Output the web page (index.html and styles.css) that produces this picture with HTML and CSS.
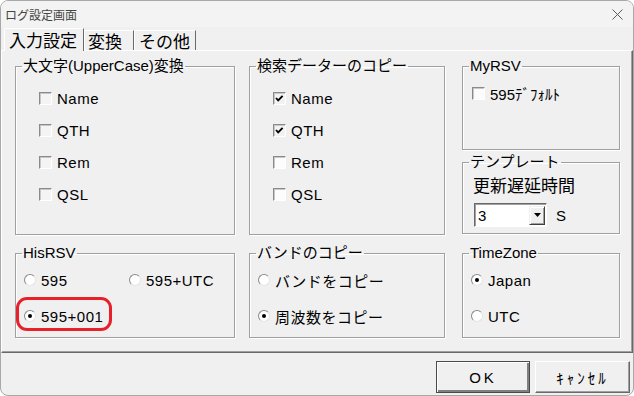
FILE: index.html
```html
<!DOCTYPE html>
<html lang="ja">
<head>
  <meta charset="UTF-8" />
  <title>ログ設定画面</title>
  <link rel="stylesheet" href="styles.css">
</head>
<body>

  <div class="window">

    <!-- Title bar -->
    <div class="titlebar">
      <span class="title">ログ設定画面</span>
      <svg class="close" width="11" height="11" viewBox="0 0 11 11">
        <path d="M0.5 0.5L10.5 10.5M10.5 0.5L0.5 10.5" stroke="#5a5a5a" stroke-width="1" fill="none"/>
      </svg>
    </div>

    <!-- Tabs -->
    <div class="tabs">
      <div class="tab active">入力設定</div>
      <div class="tab tab-conv">変換</div>
      <div class="tab tab-other">その他</div>
    </div>

    <!-- Tab page -->
    <div class="panel">
      <div class="grid">

        <fieldset class="group">
          <legend>大文字(UpperCase)変換</legend>
          <div class="checks">
            <div class="row"><span class="cb dim"></span>Name</div>
            <div class="row"><span class="cb dim"></span>QTH</div>
            <div class="row"><span class="cb dim"></span>Rem</div>
            <div class="row"><span class="cb dim"></span>QSL</div>
          </div>
        </fieldset>

        <fieldset class="group">
          <legend>検索データーのコピー</legend>
          <div class="checks">
            <div class="row"><span class="cb checked"><svg width="11" height="11" viewBox="0 0 11 11"><path d="M2 5L4.2 7.4L8.6 2.8" stroke="#000" stroke-width="1.8" fill="none"/></svg></span>Name</div>
            <div class="row"><span class="cb checked"><svg width="11" height="11" viewBox="0 0 11 11"><path d="M2 5L4.2 7.4L8.6 2.8" stroke="#000" stroke-width="1.8" fill="none"/></svg></span>QTH</div>
            <div class="row"><span class="cb"></span>Rem</div>
            <div class="row"><span class="cb"></span>QSL</div>
          </div>
        </fieldset>

        <div class="stack">
          <fieldset class="group g-myrsv">
            <legend>MyRSV</legend>
            <div class="myrsv">
              <div class="row"><span class="cb"></span>595ﾃﾞﾌｫﾙﾄ</div>
            </div>
          </fieldset>
          <fieldset class="group g-template">
            <legend>テンプレート</legend>
            <div class="template">
              <div class="delay-label">更新遅延時間</div>
              <div class="combo">
                <div class="select">
                  <span class="value">3</span>
                  <span class="arrow"><svg width="7" height="4" viewBox="0 0 7 4"><path d="M0 0H7L3.5 4Z" fill="#000"/></svg></span>
                </div>
                <span class="unit">S</span>
              </div>
            </div>
          </fieldset>
        </div>

        <fieldset class="group">
          <legend>HisRSV</legend>
          <div class="radios">
            <div class="row">
              <span class="opt opt-wide"><span class="rb"></span>595</span>
              <span class="opt"><span class="rb"></span>595+UTC</span>
            </div>
            <div class="row marked">
              <span class="opt"><span class="rb on"></span>595+001</span>
            </div>
          </div>
        </fieldset>

        <fieldset class="group">
          <legend>バンドのコピー</legend>
          <div class="radios">
            <div class="row"><span class="rb"></span>バンドをコピー</div>
            <div class="row"><span class="rb on"></span>周波数をコピー</div>
          </div>
        </fieldset>

        <fieldset class="group col3">
          <legend>TimeZone</legend>
          <div class="radios">
            <div class="row"><span class="rb on"></span>Japan</div>
            <div class="row"><span class="rb"></span>UTC</div>
          </div>
        </fieldset>

      </div>
    </div>

    <!-- Dialog buttons -->
    <div class="buttons">
      <button class="btn default">OK</button>
      <button class="btn">ｷｬﾝｾﾙ</button>
    </div>

  </div>

</body>
</html>
```

FILE: styles.css
```css
body {
  margin: 0;
  background-color: #ffffff;
  font-family: "Liberation Sans", "Noto Sans CJK JP", sans-serif;
  color: #000;
}

.window {
  width: 634px;
  height: 396px;
  box-sizing: border-box;
  border: 1px solid #a8a8a8;
  border-radius: 8px;
  background-color: #f0f0f0;
  overflow: hidden;
  display: flex;
  flex-direction: column;
}

.titlebar {
  height: 26px;
  background-color: #f3f3f3;
  display: flex;
  align-items: center;
  justify-content: space-between;
  padding: 0 10px 0 4px;
}

.title {
  font-family: "Noto Sans CJK JP", sans-serif;
  font-size: 12px;
  color: #444;
}

.tabs {
  height: 23px;
  display: flex;
  align-items: flex-end;
  padding-left: 3px;
  position: relative;
  z-index: 1;
}

.tab {
  font-family: "Noto Sans CJK JP", sans-serif;
  font-size: 17px;
  line-height: 19px;
  height: 19px;
  border-top: 1px solid #fff;
  border-left: 1px solid #fff;
  border-right: 1px solid #696969;
  padding: 0 5px 0 4px;
  background-color: #f0f0f0;
}

.tab.active {
  height: 22px;
  line-height: 21px;
  padding: 0 6px 0 4px;
  margin-bottom: -1px;
}

.tab-conv {
  padding: 0 11px 0 3px;
}

.panel {
  height: 303px;
  box-sizing: border-box;
  border-top: 1px solid #fff;
  border-left: 1px solid #fff;
  border-right: 1px solid #696969;
  border-bottom: 1px solid #696969;
  box-shadow: inset -1px -1px 0 #a0a0a0;
  padding: 6px 0 0 13px;
}

.grid {
  display: grid;
  grid-template-columns: 220px 196px 161px;
  grid-template-rows: 178px 94px;
  column-gap: 14px;
  row-gap: 9px;
}

.group {
  margin: 0;
  padding: 0;
  min-width: 0;
  box-sizing: border-box;
  border: 1px solid #a0a0a0;
  box-shadow: 1px 1px 0 #fff, inset 1px 1px 0 #fff;
}

.group legend {
  margin-left: 6px;
  padding: 0 1px;
  font-size: 15px;
  line-height: 18px;
}

.col3, .stack {
  margin-left: 3px;
}

.stack {
  display: flex;
  flex-direction: column;
  gap: 3px;
}

.g-myrsv {
  height: 93px;
}

.g-template {
  height: 81px;
}

.row {
  display: flex;
  align-items: center;
  font-size: 15px;
  letter-spacing: 0.5px;
}

.checks {
  padding: 7px 0 0 23px;
}

.checks .row {
  height: 32px;
}

.myrsv {
  padding: 2px 0 0 9px;
}

.myrsv .row {
  height: 32px;
  letter-spacing: 0;
}

.cb {
  width: 13px;
  height: 13px;
  box-sizing: border-box;
  border: 1px solid;
  border-color: #8a8a8a #ffffff #ffffff #8a8a8a;
  box-shadow: inset 1px 1px 0 #c8c8c8;
  background-color: #fcfcfc;
  margin-right: 5px;
  display: flex;
  align-items: center;
  justify-content: center;
}

.cb.dim {
  background-color: #f4f4f4;
}

.cb.checked {
  background-color: #f2f2f2;
}

.template {
  padding: 3px 0 0 10px;
}

.delay-label {
  font-family: "Noto Sans CJK JP", sans-serif;
  font-size: 17px;
  line-height: 22px;
}

.combo {
  display: flex;
  align-items: center;
  gap: 9px;
  margin-top: 7px;
  padding-left: 1px;
}

.select {
  width: 73px;
  height: 24px;
  box-sizing: border-box;
  border: 1px solid;
  border-color: #696969 #ffffff #ffffff #696969;
  box-shadow: inset 1px 1px 0 #a0a0a0;
  background-color: #fff;
  display: flex;
  align-items: center;
  justify-content: space-between;
  padding: 2px 1px 2px 3px;
}

.value {
  font-size: 15px;
}

.arrow {
  width: 16px;
  height: 19px;
  box-sizing: border-box;
  background-color: #f0f0f0;
  border: 1px solid;
  border-color: #f0f0f0 #404040 #404040 #f0f0f0;
  box-shadow: inset 1px 1px 0 #fff, inset -1px -1px 0 #a0a0a0;
  display: flex;
  align-items: center;
  justify-content: center;
}

.unit {
  font-size: 15px;
}

.radios {
  padding-left: 8px;
}

.radios .row {
  height: 36px;
}

.opt {
  display: flex;
  align-items: center;
}

.opt-wide {
  width: 105px;
}

.rb {
  width: 12px;
  height: 12px;
  border-radius: 50%;
  box-sizing: border-box;
  background-color: #fff;
  border: 1px solid;
  border-color: #8a8a8a #e4e4e4 #e4e4e4 #8a8a8a;
  margin-right: 5px;
  display: flex;
  align-items: center;
  justify-content: center;
}

.rb.on::before {
  content: "";
  width: 4px;
  height: 4px;
  border-radius: 50%;
  background-color: #000;
}

.row.marked {
  position: relative;
}

.row.marked::after {
  content: "";
  position: absolute;
  left: -8px;
  top: -1px;
  width: 96px;
  height: 34px;
  box-sizing: border-box;
  border: 3px solid #e8202a;
  border-radius: 11px;
}

.buttons {
  display: flex;
  justify-content: flex-end;
  gap: 5px;
  padding: 8px 3px 0 0;
}

.btn {
  height: 32px;
  width: 95px;
  box-sizing: border-box;
  background-color: #f0f0f0;
  border: 1px solid;
  border-color: #ffffff #696969 #696969 #ffffff;
  box-shadow: inset -1px -1px 0 #a0a0a0;
  font-family: "Liberation Sans", "Noto Sans CJK JP", sans-serif;
  font-size: 15px;
  letter-spacing: 3px;
  color: #000;
  padding: 0;
}

.btn.default {
  width: 94px;
  border: 1px solid #4a4a4a;
  box-shadow: inset 1px 1px 0 #fff, inset -2px -2px 0 #808080;
}
```
